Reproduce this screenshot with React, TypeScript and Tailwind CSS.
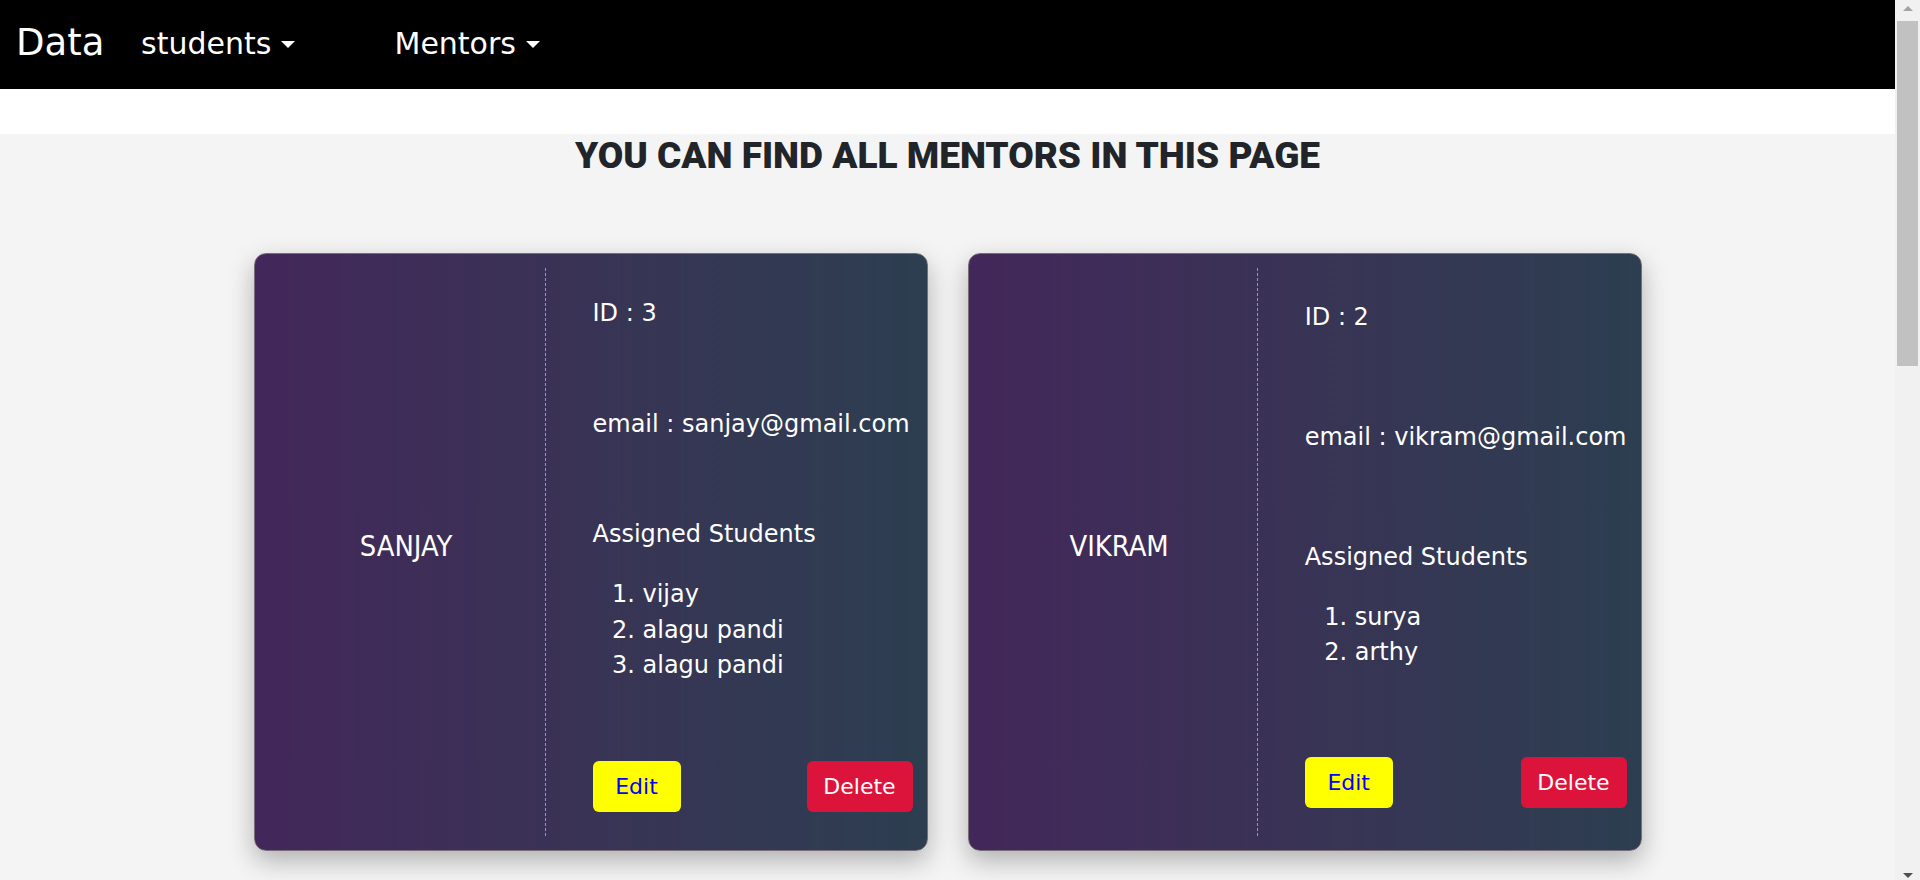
import React from "react";

type Mentor = {
	id: number;
	name: string;
	email: string;
	students: string[];
};

const mentors: Mentor[] = [
	{ id: 3, name: "SANJAY", email: "sanjay@gmail.com", students: ["vijay", "alagu pandi", "alagu pandi"] },
	{ id: 2, name: "VIKRAM", email: "vikram@gmail.com", students: ["surya", "arthy"] },
];

const Caret = () => (
	<span className="ml-[10px] inline-block w-0 h-0 border-t-[7px] border-x-[7.5px] border-x-transparent border-t-white mt-[2px]" />
);

const Navbar = () => (
	<nav className="h-[89px] bg-black text-white flex items-center pl-[16px] pb-[3px]">
		<span className="w-[125px] text-[37px]">Data</span>
		<span className="w-[253.5px] text-[30px] flex items-center">
			students
			<Caret />
		</span>
		<span className="text-[30px] flex items-center">
			Mentors
			<Caret />
		</span>
	</nav>
);

const MentorCard = ({ mentor }: { mentor: Mentor }) => (
	<div className="w-[674px] h-[598px] flex rounded-[12px] border border-[#7a6d78] bg-linear-to-r from-[#42275a] to-[#2c3e50] shadow-[0_10px_26px_rgba(0,0,0,0.28)] text-white">
		<div className="w-[290px] flex items-center justify-center pl-[13px] pb-[10px] font-['DejaVu_Sans_Condensed','DejaVu_Sans',sans-serif] text-[28.8px]">
			{mentor.name}
		</div>
		<div className="my-[14px] border-l border-dashed border-[#8e9ac0]" />
		<div className="flex-1 flex flex-col justify-around pt-[4px] pl-[47px] pr-[14px] text-[24px] leading-[35.5px] whitespace-nowrap">
			<p>ID : {mentor.id}</p>
			<p>email : {mentor.email}</p>
			<div>
				<p>Assigned Students</p>
				<ol className="list-decimal pl-[50px] mt-[24.5px] mb-[2px]">
					{mentor.students.map((s, i) => (
						<li key={i}>{s}</li>
					))}
				</ol>
			</div>
			<div className="flex justify-between">
				<button className="w-[88px] h-[51px] rounded-[6px] bg-[#ffff00] text-[#0000ff] text-[22px]">Edit</button>
				<button className="w-[106px] h-[51px] rounded-[6px] bg-[#dc143c] text-white text-[22px]">Delete</button>
			</div>
		</div>
	</div>
);

const Scrollbar = () => (
	<div className="w-[25px] shrink-0 bg-[#f1f1f1] flex flex-col items-center">
		<div className="mt-[6px] w-0 h-0 border-b-[5px] border-x-[5.5px] border-x-transparent border-b-[#a3a3a3]" />
		<div className="mt-[10px] w-[21px] h-[345px] bg-[#c1c1c1]" />
		<div className="flex-1" />
		<div className="mb-[2px] w-0 h-0 border-t-[5px] border-x-[5.5px] border-x-transparent border-t-[#505050]" />
	</div>
);

export default function App() {
	return (
		<div className="h-screen flex overflow-hidden font-['DejaVu_Sans',sans-serif]">
			<div className="flex-1 min-w-0 bg-[#f4f4f4] overflow-hidden">
				<Navbar />
				<div className="h-[45px] bg-white" />
				<main>
					<h1 className="text-center font-['Roboto',sans-serif] font-black text-[37px] leading-[43px] text-[#212529]">
						YOU CAN FIND ALL MENTORS IN THIS PAGE
					</h1>
					<div className="mt-[76px] flex justify-center gap-10 pb-[60px]">
						{mentors.map((m) => (
							<MentorCard key={m.id} mentor={m} />
						))}
					</div>
				</main>
			</div>
			<Scrollbar />
		</div>
	);
}
